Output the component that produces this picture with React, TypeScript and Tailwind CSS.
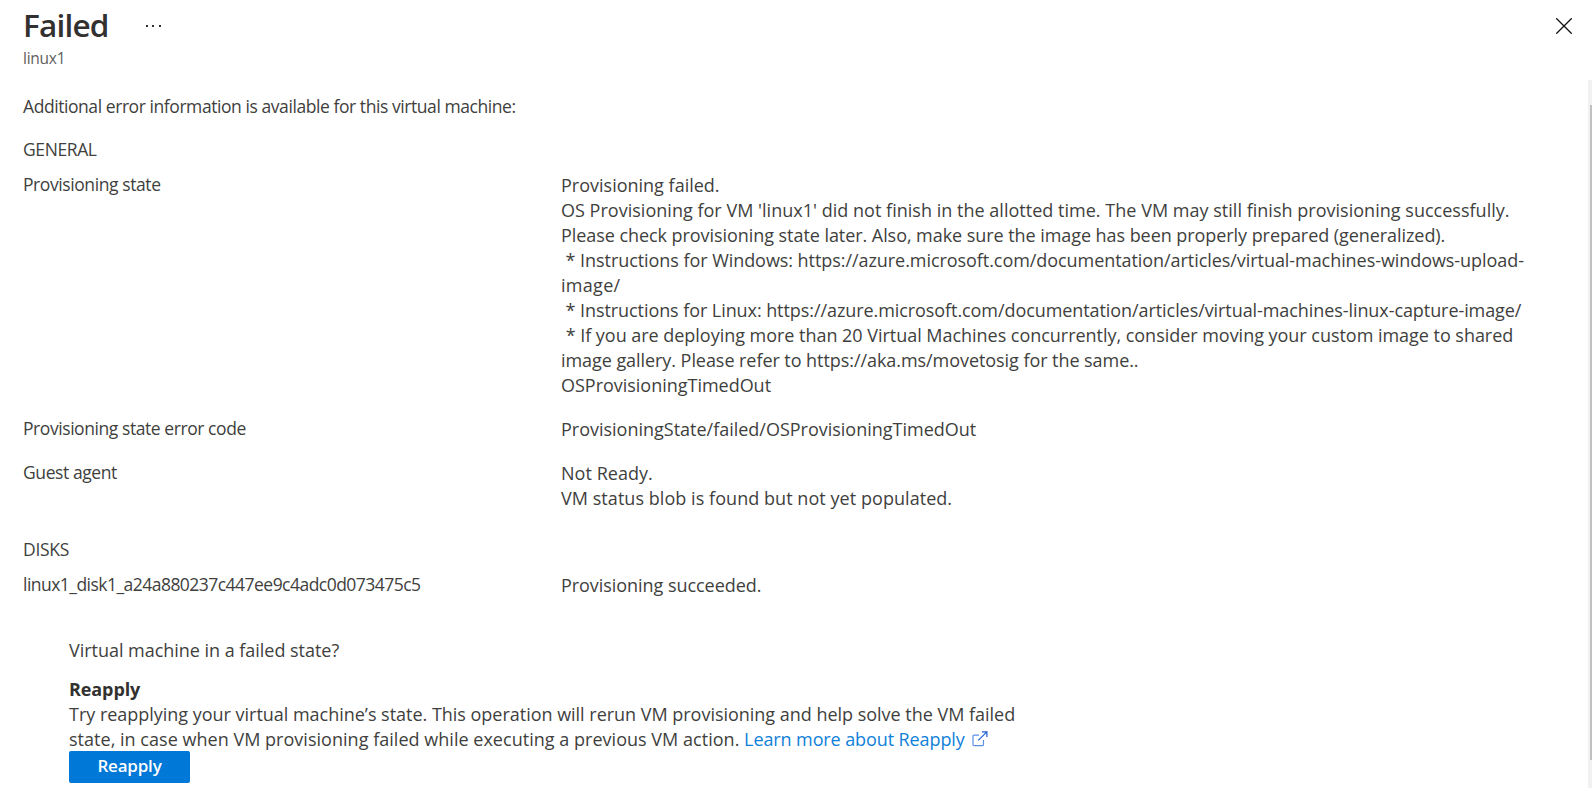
import type { ReactNode } from "react";

function Row({ label, labelClass, children }: { label: string; labelClass: string; children: ReactNode }) {
  return (
    <div className="grid grid-cols-[538px_1fr] items-start">
      <div className={`text-[17.5px] leading-6 whitespace-pre ${labelClass}`}>{label}</div>
      <div className="pt-px text-[18px] leading-[25px] whitespace-pre">{children}</div>
    </div>
  );
}

function CloseIcon() {
  return (
    <svg width="16" height="16" viewBox="0 0 16 16" fill="none" stroke="#111" strokeWidth="1.3">
      <path d="M0.3 0.3 15.7 15.7M15.7 0.3 0.3 15.7" />
    </svg>
  );
}

function ExternalIcon() {
  return (
    <svg width="16" height="16" viewBox="0 0 16 16" fill="none" strokeWidth="1.2">
      <path stroke="#5b8fe6" d="M7 4.1H2.1Q1 4.1 1 5.2v8.3q0 1.1 1.1 1.1h8.3q1.1 0 1.1-1.1V9" />
      <path stroke="#1f62d6" d="M6.2 9.4 14.9 0.9M9.9 0.9h5v5" />
    </svg>
  );
}

const detail = [
  { text: "Provisioning failed.", cls: "tracking-[0px]" },
  { text: "OS Provisioning for VM 'linux1' did not finish in the allotted time. The VM may still finish provisioning successfully.", cls: "tracking-[0.02px]" },
  { text: "Please check provisioning state later. Also, make sure the image has been properly prepared (generalized).", cls: "tracking-[-0.06px]" },
  { text: " * Instructions for Windows: https://azure.microsoft.com/documentation/articles/virtual-machines-windows-upload-", cls: "tracking-[-0.06px]" },
  { text: "image/", cls: "tracking-[0.3px]" },
  { text: " * Instructions for Linux: https://azure.microsoft.com/documentation/articles/virtual-machines-linux-capture-image/", cls: "tracking-[-0.075px]" },
  { text: " * If you are deploying more than 20 Virtual Machines concurrently, consider moving your custom image to shared", cls: "tracking-[-0.03px]" },
  { text: "image gallery. Please refer to https://aka.ms/movetosig for the same..", cls: "tracking-[-0.06px]" },
  { text: "OSProvisioningTimedOut", cls: "tracking-[-0.02px]" },
];

export default function App() {
  return (
    <div className="flex h-[788px] w-[1592px] flex-col overflow-hidden bg-white font-['Open_Sans',sans-serif] text-[#403f3e]">
      <header className="flex h-20 shrink-0 items-start justify-between pr-5 pl-6">
        <div>
          <div className="flex h-[50px] items-center">
            <h1 className="-ml-px text-[31.5px] leading-[50px] font-semibold tracking-[-0.8px] text-[#323130]">Failed</h1>
            <div className="ml-[37px] flex gap-[4.5px] pt-px">
              <i className="size-0.5 bg-[#323130]" />
              <i className="size-0.5 bg-[#323130]" />
              <i className="size-0.5 bg-[#323130]" />
            </div>
          </div>
          <p className="-ml-px pt-px text-[15.5px] leading-[15px] tracking-[-0.25px] text-[#605e5c]">linux1</p>
        </div>
        <button aria-label="Close" className="mt-[18px]">
          <CloseIcon />
        </button>
      </header>

      <div className="flex min-h-0 flex-1 justify-between">
        <main className="w-[1560px] pt-3.5 pl-[23px]">
          <p className="text-[17.5px] leading-6 tracking-[-0.43px]">
            Additional error information is available for this virtual machine:
          </p>
          <h2 className="mt-[19px] text-[17.5px] leading-6 tracking-[-0.4px]">GENERAL</h2>
          <div className="mt-[11px] flex flex-col gap-[18px]">
            <Row label="Provisioning state" labelClass="tracking-[-0.41px]">
              {detail.map((line) => (
                <div key={line.text} className={line.cls}>{line.text}</div>
              ))}
            </Row>
            <Row label="Provisioning state error code" labelClass="tracking-[-0.43px]">
              <div className="tracking-[-0.01px]">ProvisioningState/failed/OSProvisioningTimedOut</div>
            </Row>
            <Row label="Guest agent" labelClass="tracking-[-0.41px]">
              <div className="tracking-[0.04px]">Not Ready.</div>
              <div className="tracking-[0.05px]">VM status blob is found but not yet populated.</div>
            </Row>
          </div>
          <h2 className="mt-[26px] text-[17.5px] leading-6 tracking-[-0.3px]">DISKS</h2>
          <div className="mt-[11px]">
            <Row label="linux1_disk1_a24a880237c447ee9c4adc0d073475c5" labelClass="tracking-[-0.53px]">
              <div className="tracking-[-0.05px]">Provisioning succeeded.</div>
            </Row>
          </div>

          <section className="mt-10 ml-[46px] text-[18px] leading-[25px] whitespace-pre">
            <p className="tracking-[-0.03px]">Virtual machine in a failed state?</p>
            <h3 className="mt-3.5 font-bold tracking-[-0.1px] text-[#323130]">Reapply</h3>
            <p className="tracking-[-0.02px]">
              Try reapplying your virtual machine’s state. This operation will rerun VM provisioning and help solve the VM failed
            </p>
            <div className="flex items-center">
              <span className="tracking-[0.025px]">state, in case when VM provisioning failed while executing a previous VM action. </span>
              <a className="flex items-center text-[#1080d8]">
                <span className="tracking-[-0.1px]">Learn more about Reapply</span>
                <span className="ml-[7px] -mt-0.5">
                  <ExternalIcon />
                </span>
              </a>
            </div>
            <button className="-mt-px flex h-8 w-[121px] items-center justify-center rounded-[2px] bg-[#0078d7] pb-[3px] text-[17px] font-semibold tracking-[-0.2px] text-white">
              Reapply
            </button>
          </section>
        </main>
        <div className="flex w-1 flex-col items-end bg-[#f1f1f1] pt-[25px]">
          <div className="h-[655px] w-0.5 bg-[#c1c1c1]" />
        </div>
      </div>
    </div>
  );
}
